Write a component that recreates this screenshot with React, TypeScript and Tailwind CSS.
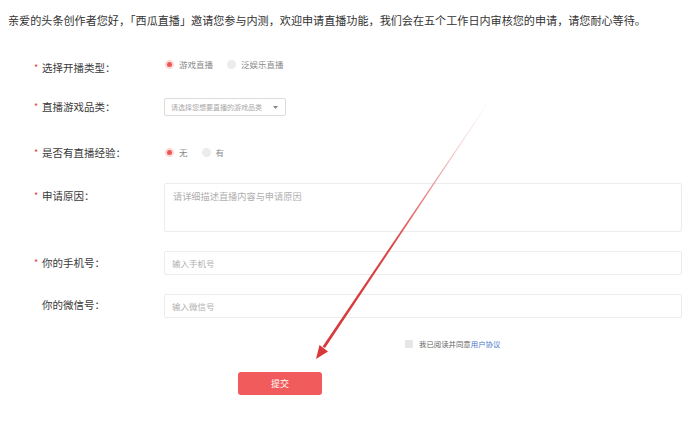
const font = { fontFamily: '"Noto Sans CJK SC", "Noto Sans", sans-serif' };

function Label({ text, required = true, className = "" }: { text: string; required?: boolean; className?: string }) {
  return (
    <div className={`w-[164px] shrink-0 pl-[34px] flex items-center text-[10.5px] leading-[16px] text-[#3a3a3a] ${className}`}>
      <span className="w-[8px] text-[#e0474a] text-[9px]">{required ? "*" : ""}</span>
      <span>{text}：</span>
    </div>
  );
}

function Radio({ label, checked }: { label: string; checked?: boolean }) {
  return (
    <div className="flex items-center gap-[5px] mr-[14px]">
      <span
        className={`w-[9px] h-[9px] rounded-full flex items-center justify-center ${
          checked ? "bg-[#fbd9d9]" : "bg-[#ececec]"
        }`}
      >
        {checked && <span className="w-[5px] h-[5px] rounded-full bg-[#ef5656]" />}
      </span>
      <span className="text-[8.5px] text-[#8a8a8a]">{label}</span>
    </div>
  );
}

function Arrow() {
  return (
    <svg className="absolute inset-0 pointer-events-none" width="682" height="445" viewBox="0 0 682 445">
      <defs>
        <linearGradient id="shaft" gradientUnits="userSpaceOnUse" x1="492" y1="97" x2="324" y2="347">
          <stop offset="0" stopColor="#d8383a" stopOpacity="0" />
          <stop offset="0.3" stopColor="#d8383a" stopOpacity="0.45" />
          <stop offset="0.6" stopColor="#d8383a" stopOpacity="0.95" />
          <stop offset="1" stopColor="#d8383a" stopOpacity="1" />
        </linearGradient>
      </defs>
      <polygon points="492.2,97.1 491.8,96.9 322.6,346.5 325.0,348.1" fill="url(#shaft)" />
      <polygon points="316,359 328,351.5 319.5,345" fill="#d8383a" />
    </svg>
  );
}

export default function App() {
  return (
    <div className="relative w-[682px] h-[445px] overflow-hidden bg-white" style={font}>
      <p className="pt-[12px] pl-[8px] text-[11.1px] leading-[16px] text-[#333] whitespace-nowrap">
        亲爱的头条创作者您好，「西瓜直播」邀请您参与内测，欢迎申请直播功能，我们会在五个工作日内审核您的申请，请您耐心等待。
      </p>

      <div className="flex items-start mt-[28px]">
        <Label text="选择开播类型" className="mt-[4px]" />
        <div className="flex items-center h-[16px] pl-[1px]">
          <Radio label="游戏直播" checked />
          <Radio label="泛娱乐直播" />
        </div>
      </div>

      <div className="flex items-start mt-[22px]">
        <Label text="直播游戏品类" className="mt-[1px]" />
        <div className="w-[122px] h-[18px] border border-[#dcdcdc] rounded-[2px] flex items-center justify-between pl-[6px] pr-[7px]">
          <span className="text-[7px] text-[#a8a8a8]">请选择您想要直播的游戏品类</span>
          <svg width="5" height="3" viewBox="0 0 5 3">
            <path d="M0 0 L5 0 L2.5 3 Z" fill="#8a8a8a" />
          </svg>
        </div>
      </div>

      <div className="flex items-start mt-[28px]">
        <Label text="是否有直播经验" className="mt-[1px]" />
        <div className="flex items-center h-[16px] pl-[1px]">
          <Radio label="无" checked />
          <Radio label="有" />
        </div>
      </div>

      <div className="flex items-start mt-[22px]">
        <Label text="申请原因" className="mt-[5px]" />
        <div className="w-[540px] h-[49px] border border-[#ececec] rounded-[2px] pl-[8px] pt-[5px] text-[9.2px] leading-[14px] text-[#b0b0b0]">
          请详细描述直播内容与申请原因
        </div>
      </div>

      <div className="flex items-start mt-[19px]">
        <Label text="你的手机号" className="mt-[4px]" />
        <div className="w-[540px] h-[24px] border border-[#ececec] rounded-[2px] pl-[7px] flex items-center">
          <span className="text-[8.5px] text-[#b0b0b0]">输入手机号</span>
        </div>
      </div>

      <div className="flex items-start mt-[19px]">
        <Label text="你的微信号" required={false} className="mt-[3px]" />
        <div className="w-[540px] h-[24px] border border-[#ececec] rounded-[2px] pl-[7px] flex items-center">
          <span className="text-[8.5px] text-[#b0b0b0]">输入微信号</span>
        </div>
      </div>

      <div className="flex items-center mt-[20px] h-[12px] pl-[405px]">
        <span className="w-[8px] h-[8px] rounded-[1px] bg-[#e6e6e6] mr-[6px]" />
        <span className="text-[7.4px] text-[#666]">
          我已阅读并同意<span className="text-[#4a78c8]">用户协议</span>
        </span>
      </div>

      <div className="mt-[22px] pl-[238px]">
        <button className="w-[84px] h-[23px] rounded-[3px] bg-[#f25b5b] text-white text-[9px] flex items-center justify-center">
          提交
        </button>
      </div>

      <Arrow />
    </div>
  );
}
